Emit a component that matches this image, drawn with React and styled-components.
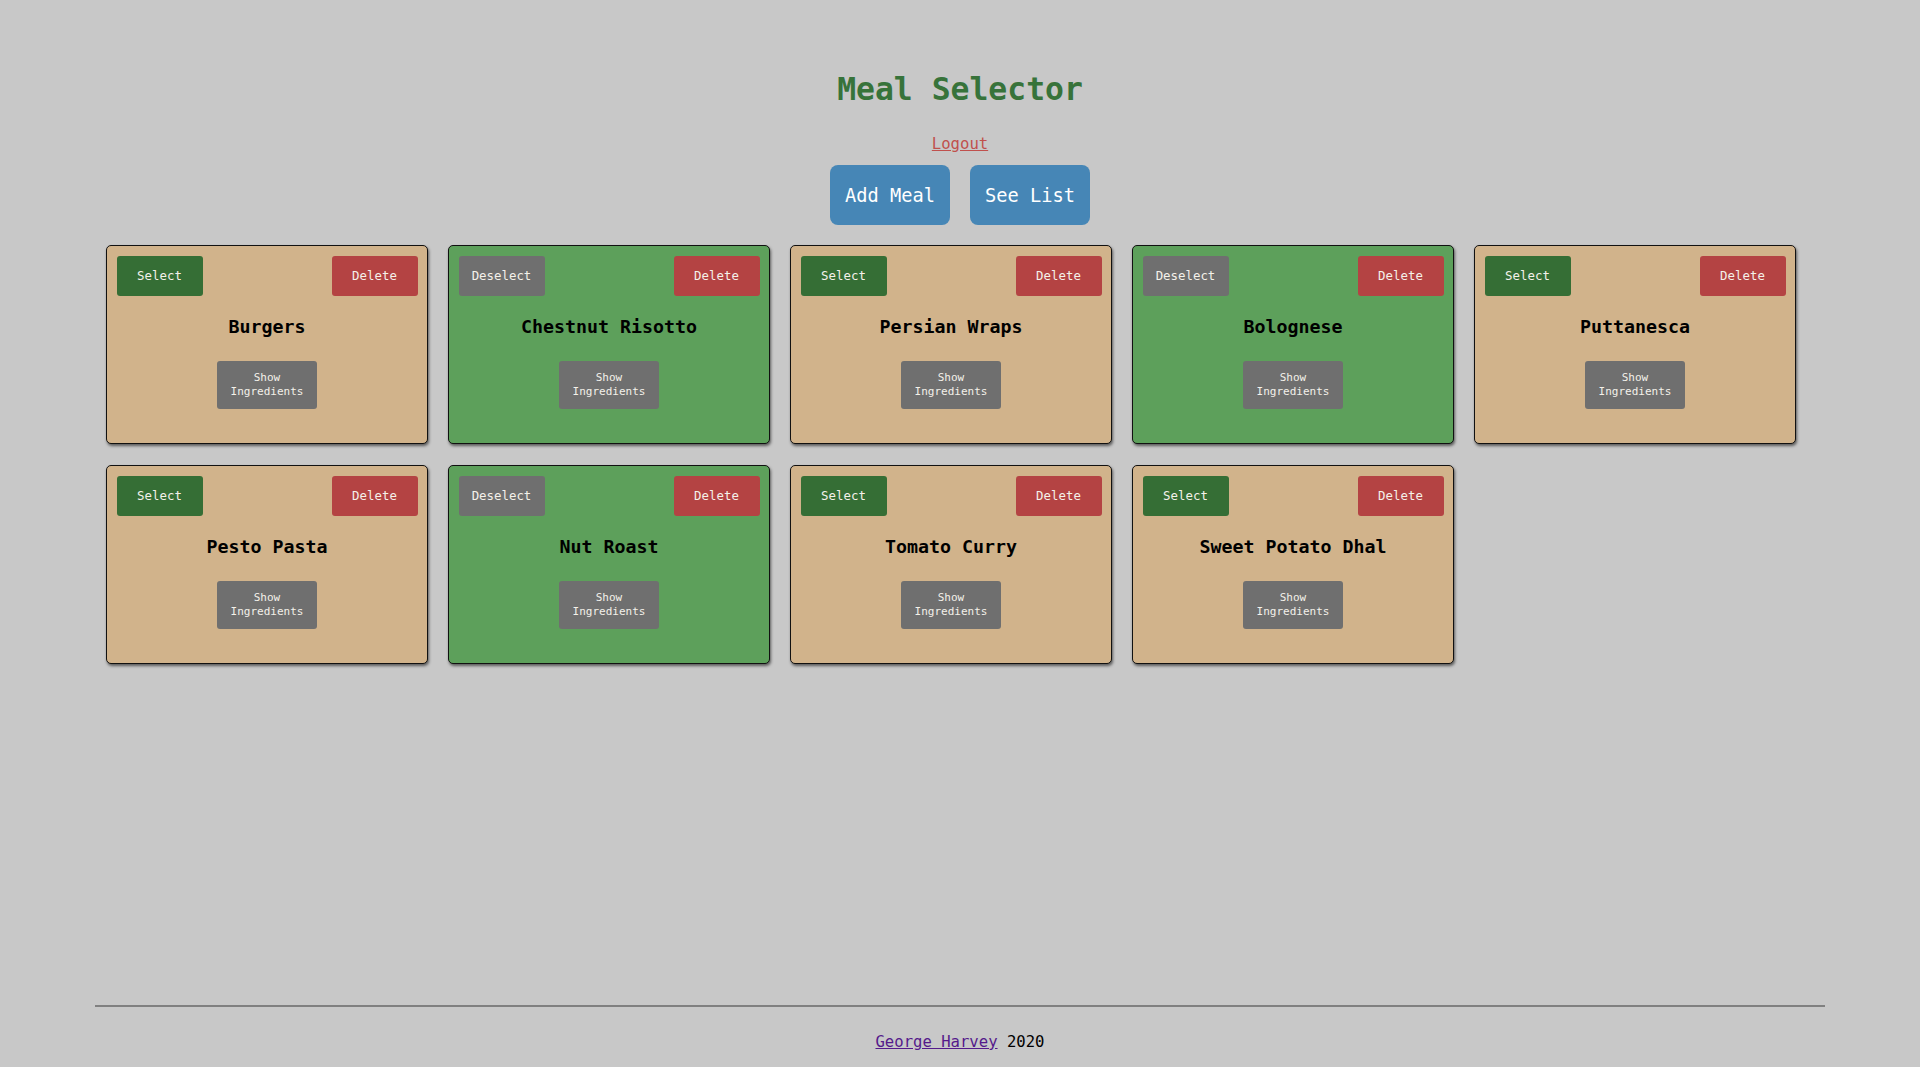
import React from "react";
import styled, { createGlobalStyle } from "styled-components";

const Global = createGlobalStyle`
  html, body { margin: 0; padding: 0; background: #c8c8c8; }
  body { font-family: "DejaVu Sans Mono", "Liberation Mono", monospace; }
`;

const Page = styled.div`
  min-height: 100vh;
  display: flex;
  flex-direction: column;
  align-items: center;
`;

const Main = styled.main`
  flex: 1;
  width: 1728px;
  display: flex;
  flex-direction: column;
  align-items: center;
`;

const Title = styled.h1`
  margin: 67px 0 0;
  font-size: 31.4px;
  line-height: 44px;
  font-weight: bold;
  color: #37733a;
`;

const LogoutLink = styled.a`
  margin-top: 23px;
  font-size: 15.6px;
  line-height: 20px;
  color: #c0504d;
  text-decoration: underline;
  cursor: pointer;
`;

const TopBar = styled.div`
  display: flex;
  gap: 20px;
  margin-top: 11px;
`;

const BigButton = styled.button`
  width: 120px;
  height: 60px;
  border: none;
  border-radius: 8px;
  background: #4686b6;
  color: #fff;
  font-family: inherit;
  font-size: 18.7px;
`;

const Grid = styled.div`
  align-self: stretch;
  display: flex;
  flex-wrap: wrap;
  column-gap: 20px;
  row-gap: 21px;
  padding-left: 10px;
  margin-top: 20px;
`;

const Card = styled.div`
  box-sizing: border-box;
  width: 322px;
  height: 199px;
  border: 1.5px solid #111;
  border-radius: 5px;
  box-shadow: 1px 2px 3px rgba(0, 0, 0, 0.55);
  background: ${(p) => (p.$selected ? "#5da05b" : "#d1b38b")};
  padding: 9.5px 9.5px 0;
  display: flex;
  flex-direction: column;
  align-items: center;
`;

const CardTop = styled.div`
  align-self: stretch;
  display: flex;
  justify-content: space-between;
`;

const SmallButton = styled.button`
  width: 86px;
  height: 40px;
  border: none;
  border-radius: 3px;
  color: #f4f1ea;
  font-family: inherit;
  font-size: 12.4px;
  background: ${(p) =>
    p.$variant === "select" ? "#356e35" : p.$variant === "delete" ? "#b44343" : "#6f6f6f"};
`;

const MealName = styled.h3`
  margin: 21px 0 0;
  font-size: 18.3px;
  line-height: 20px;
  font-weight: bold;
  color: #000;
`;

const IngredientsButton = styled.button`
  margin-top: 24px;
  width: 100px;
  height: 48px;
  border: none;
  border-radius: 3px;
  background: #6f6f6f;
  color: #f4f1ea;
  font-family: inherit;
  font-size: 11px;
  line-height: 14px;
  padding: 0 6px;
`;

const Footer = styled.footer`
  width: 1730px;
  display: flex;
  flex-direction: column;
  align-items: center;
`;

const Rule = styled.hr`
  width: 100%;
  margin: 0;
  border: none;
  border-top: 2px solid #808080;
`;

const FooterText = styled.p`
  margin: 25px 0 0;
  height: 35px;
  font-size: 15.6px;
  line-height: 20px;
  color: #000;
`;

const FooterLink = styled.a`
  color: #551a8b;
  text-decoration: underline;
`;

const meals = [
  { name: "Burgers", selected: false },
  { name: "Chestnut Risotto", selected: true },
  { name: "Persian Wraps", selected: false },
  { name: "Bolognese", selected: true },
  { name: "Puttanesca", selected: false },
  { name: "Pesto Pasta", selected: false },
  { name: "Nut Roast", selected: true },
  { name: "Tomato Curry", selected: false },
  { name: "Sweet Potato Dhal", selected: false },
];

function MealCard({ meal }) {
  return (
    <Card $selected={meal.selected}>
      <CardTop>
        <SmallButton $variant={meal.selected ? "deselect" : "select"}>
          {meal.selected ? "Deselect" : "Select"}
        </SmallButton>
        <SmallButton $variant="delete">Delete</SmallButton>
      </CardTop>
      <MealName>{meal.name}</MealName>
      <IngredientsButton>Show Ingredients</IngredientsButton>
    </Card>
  );
}

export default function App() {
  return (
    <Page>
      <Global />
      <Main>
        <Title>Meal Selector</Title>
        <LogoutLink>Logout</LogoutLink>
        <TopBar>
          <BigButton>Add Meal</BigButton>
          <BigButton>See List</BigButton>
        </TopBar>
        <Grid>
          {meals.map((m) => (
            <MealCard key={m.name} meal={m} />
          ))}
        </Grid>
      </Main>
      <Footer>
        <Rule />
        <FooterText>
          <FooterLink href="#">George Harvey</FooterLink> 2020
        </FooterText>
      </Footer>
    </Page>
  );
}
